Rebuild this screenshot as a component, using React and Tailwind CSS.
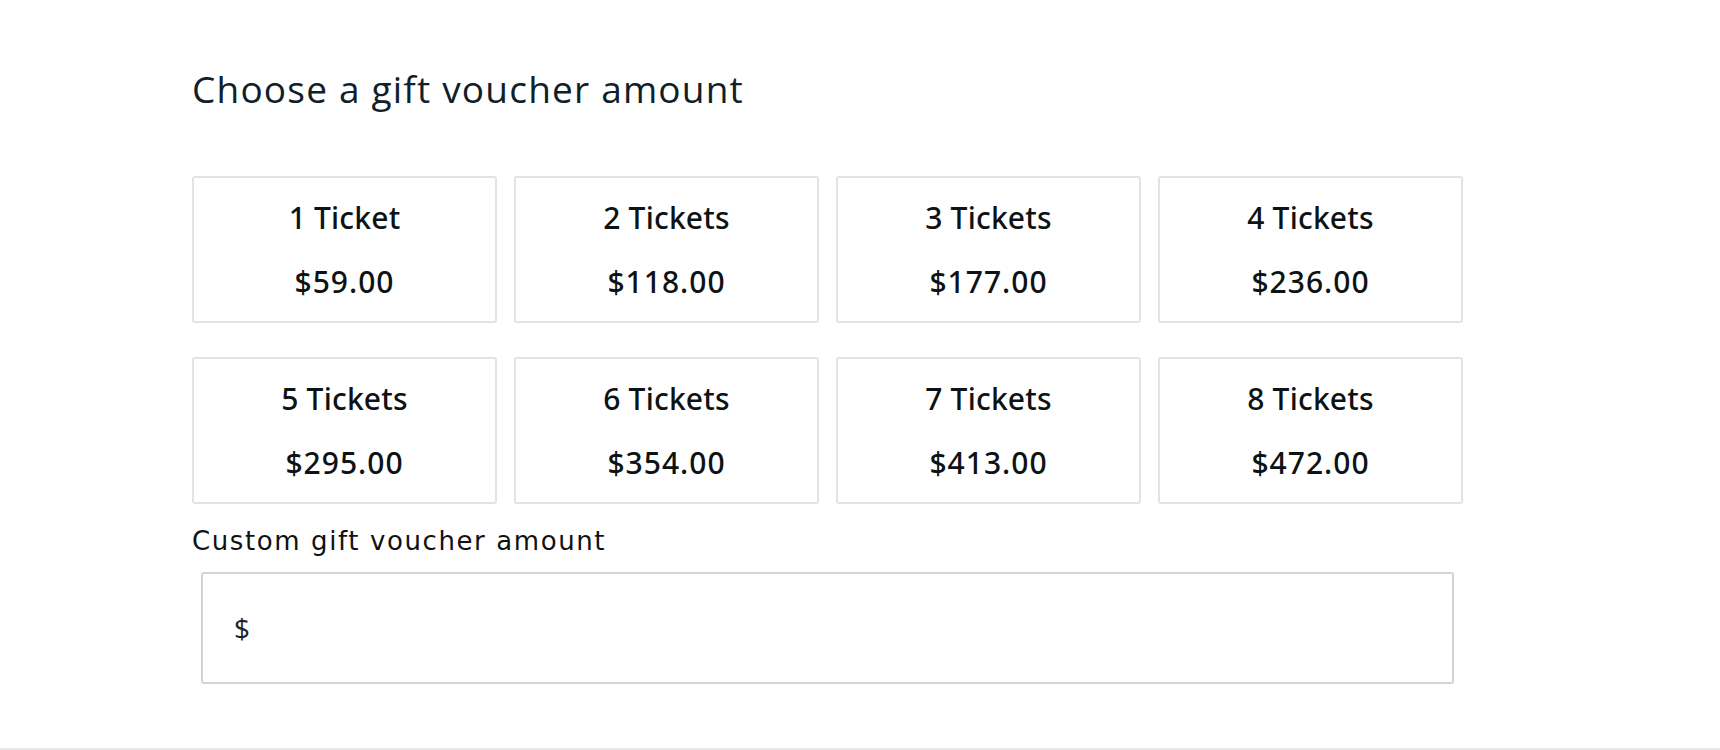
const options = [
  { label: '1 Ticket', price: '$59.00' },
  { label: '2 Tickets', price: '$118.00' },
  { label: '3 Tickets', price: '$177.00' },
  { label: '4 Tickets', price: '$236.00' },
  { label: '5 Tickets', price: '$295.00' },
  { label: '6 Tickets', price: '$354.00' },
  { label: '7 Tickets', price: '$413.00' },
  { label: '8 Tickets', price: '$472.00' },
];

function VoucherCard({ label, price }) {
  return (
    <button
      type="button"
      className="flex h-[147px] flex-col items-center justify-center gap-[26px] rounded-[3px] border-2 border-[#e3e3e3] bg-white font-medium text-[#0d1214] [font-family:'Noto_Sans',sans-serif]"
    >
      <span className="text-[30px] leading-[38px] tracking-[0.2px]">{label}</span>
      <span className="text-[30px] leading-[38px] tracking-[1px]">{price}</span>
    </button>
  );
}

export default function App() {
  return (
    <div className="h-[750px] border-b-2 border-[#e8e8e8] bg-white">
      <div className="w-[1271px] pt-[66px] pl-[192px] box-content">
        <h1 className="text-[37px] leading-[46px] tracking-[1.2px] text-[#0f2029] [font-family:'Open_Sans',sans-serif]">
          Choose a gift voucher amount
        </h1>

        <div className="mt-[64px] grid grid-cols-4 gap-x-[17px] gap-y-[34px]">
          {options.map((o) => (
            <VoucherCard key={o.label} {...o} />
          ))}
        </div>

        <label
          htmlFor="custom-amount"
          className="mt-[20px] block text-[26px] leading-[34px] tracking-[1.6px] text-[#111] [font-family:'DejaVu_Sans',sans-serif]"
        >
          Custom gift voucher amount
        </label>

        <div className="mx-[9px] mt-[14px] flex h-[112px] items-center rounded-[3px] border-2 border-[#d4d4d4] px-[31px]">
          <span className="text-[28px] text-[#222] [font-family:'Open_Sans',sans-serif]">$</span>
          <input
            id="custom-amount"
            type="text"
            className="ml-2 flex-1 bg-transparent text-[27px] outline-none"
          />
        </div>
      </div>
    </div>
  );
}
